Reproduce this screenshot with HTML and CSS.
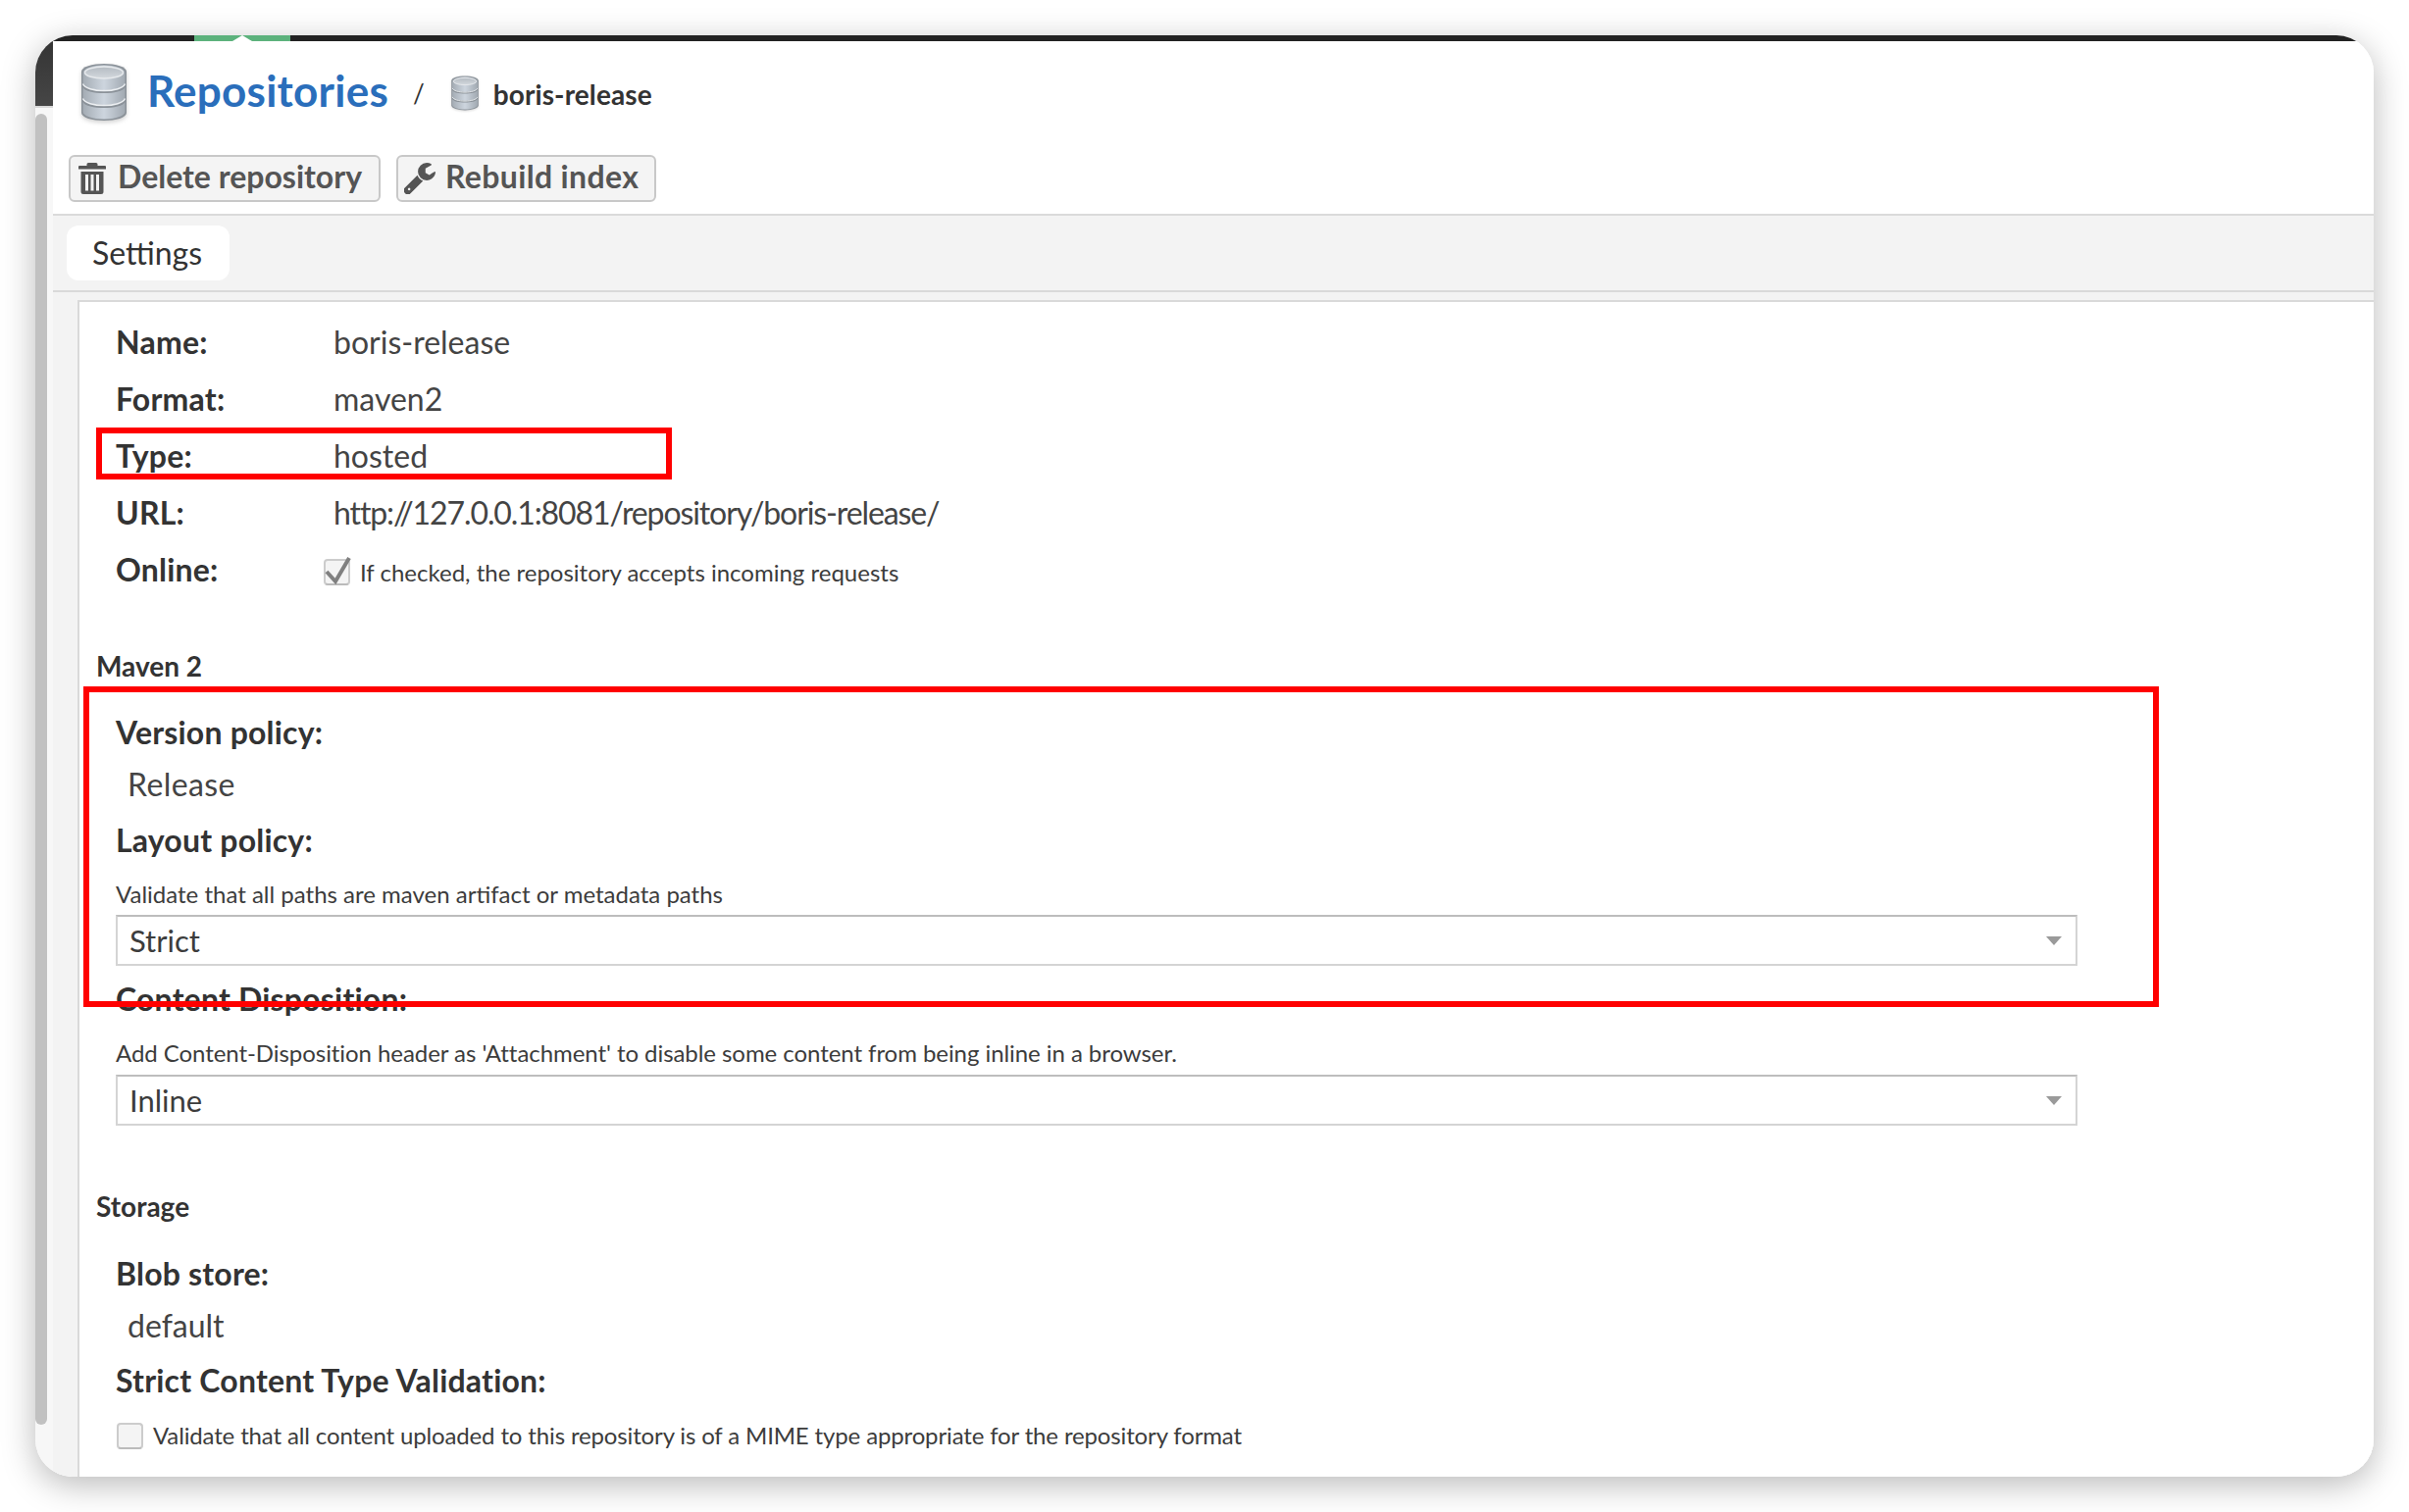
FILE: index.html
```html
<!DOCTYPE html>
<html lang="en">
<head>
<meta charset="utf-8">
<title>Repositories / boris-release</title>
<link rel="stylesheet" href="styles.css">
</head>
<body>
<svg class="defs" width="0" height="0" aria-hidden="true">
  <defs>
    <linearGradient id="dbg" x1="0" y1="0" x2="1" y2="0">
      <stop offset="0" stop-color="#a4acb4"/>
      <stop offset=".5" stop-color="#cdd5de"/>
      <stop offset="1" stop-color="#a2aab2"/>
    </linearGradient>
    <linearGradient id="dbt" x1="0" y1="0" x2="0" y2="1">
      <stop offset="0" stop-color="#b4bbc2"/>
      <stop offset="1" stop-color="#d3d8dd"/>
    </linearGradient>
    <symbol id="db" viewBox="0 0 50 60">
      <path d="M2 9C2 4 13 1 25 1s23 3 23 8v42c0 5-11 8-23 8S2 56 2 51z" fill="#8b9299"/>
      <path d="M3.500 10c0-4 10-7.500 21.500-7.500S46.500 6 46.500 10v11c0 4-10 7-21.500 7S3.500 25 3.500 21z" fill="url(#dbg)"/>
      <path d="M3.500 25c2 4 11 6 21.500 6s19.500-2 21.500-6v11c0 4-10 7-21.500 7S3.500 40 3.500 36z" fill="url(#dbg)"/>
      <path d="M3.500 40c2 4 11 6 21.500 6s19.500-2 21.500-6v10c0 4-10 7.500-21.500 7.500S3.500 54 3.500 50z" fill="url(#dbg)"/>
      <ellipse cx="25" cy="10" rx="19.500" ry="6" fill="url(#dbt)" stroke="#e6e9ec" stroke-width="1.500"/>
      <path d="M3.500 21.500c2 4.500 11 7 21.500 7s19.500-2.500 21.500-7M3.500 36.500c2 4.500 11 7 21.500 7s19.500-2.500 21.500-7" fill="none" stroke="#eceff2" stroke-width="1.500"/>
    </symbol>
  </defs>
</svg>

<div class="window">
  <aside class="rail">
    <div class="rail-dark"></div>
    <div class="rail-track"><div class="scrollbar"></div></div>
  </aside>

  <main class="main">
    <div class="strip"><div class="strip-tab"><span class="strip-notch"></span></div></div>

    <header class="crumbs">
      <svg class="db-large"><use href="#db"/></svg>
      <a class="crumb-title">Repositories</a>
      <span class="crumb-sep">/</span>
      <svg class="db-small"><use href="#db"/></svg>
      <span class="crumb-leaf">boris-release</span>
    </header>

    <div class="toolbar">
      <button class="btn btn-delete" type="button">
        <svg class="btn-icon" viewBox="0 0 28 32"><path fill="#555" d="M10 0h8a1.500 1.500 0 0 1 1.500 1.500V3H27a1 1 0 0 1 1 1v2.500H0V4a1 1 0 0 1 1-1h7.500V1.500A1.500 1.500 0 0 1 10 0zM2.500 9h23v20.500A2.500 2.500 0 0 1 23 32H5a2.500 2.500 0 0 1-2.500-2.500zM7 12v16.500h3V12zm5.500 0v16.500h3V12zM18 12v16.500h3V12z" fill-rule="evenodd"/></svg>
        Delete repository
      </button>
      <button class="btn btn-rebuild" type="button">
        <svg class="btn-icon" viewBox="128 128 1600 1600"><path fill="#555" d="M448 1472q0-26-19-45t-45-19-45 19-19 45 19 45 45 19 45-19 19-45zm644-420l-682 682q-37 37-90 37-52 0-91-37l-106-108q-38-36-38-90 0-53 38-91l681-681q39 98 114.500 173.500t173.500 114.500zm634-435q0 39-23 106-47 134-164.500 217.500t-258.500 83.500q-185 0-316.500-131.500t-131.500-316.500 131.500-316.500 316.500-131.500q58 0 121.500 16.500t107.500 46.500q16 11 16 28t-16 28l-293 169v224l193 107q5-3 79-48.500t135.500-81 70.500-35.500q15 0 23.500 10t8.500 25z"/></svg>
        Rebuild index
      </button>
    </div>

    <nav class="tabbar"><span class="tab">Settings</span></nav>

    <div class="body">
      <section class="form">
        <div class="rows">
          <span class="label">Name:</span><span class="val">boris-release</span>
          <span class="label">Format:</span><span class="val">maven2</span>
          <span class="label">Type:</span><span class="val">hosted</span>
          <span class="label">URL:</span><span class="val val-url">http://127.0.0.1:8081/repository/boris-release/</span>
          <span class="label">Online:</span>
          <span class="check-line check-online">
            <span class="box box-on">
              <svg class="tick" viewBox="0 0 28 28"><path d="M3 13l9 10L26-1" fill="none" stroke="#808080" stroke-width="4"/></svg>
            </span>
            <span class="help">If checked, the repository accepts incoming requests</span>
          </span>
        </div>

        <h2 class="heading heading-maven">Maven 2</h2>
        <div class="label field-maven">Version policy:</div>
        <div class="value value-wide">Release</div>
        <div class="label field-next">Layout policy:</div>
        <div class="help help-block">Validate that all paths are maven artifact or metadata paths</div>
        <div class="select"><span>Strict</span><i class="caret"></i></div>
        <div class="label field-tight">Content Disposition:</div>
        <div class="help help-block help-tight">Add Content-Disposition header as 'Attachment' to disable some content from being inline in a browser.</div>
        <div class="select select-low"><span>Inline</span><i class="caret"></i></div>

        <h2 class="heading heading-storage">Storage</h2>
        <div class="label field-first">Blob store:</div>
        <div class="value">default</div>
        <div class="label field-next-b">Strict Content Type Validation:</div>
        <div class="check-line check-bottom">
          <span class="box"></span>
          <span class="help help-tighter">Validate that all content uploaded to this repository is of a MIME type appropriate for the repository format</span>
        </div>
      </section>
    </div>
  </main>

  <div class="mark mark-type"></div>
  <div class="mark mark-maven"></div>
</div>
</body>
</html>
```

FILE: styles.css
```css
* { box-sizing: border-box; }
html, body { margin: 0; padding: 0; background: #fff; }
body {
  width: 2456px;
  height: 1542px;
  padding: 36px;
  overflow: hidden;
  font-family: "Lato", "Liberation Sans", sans-serif;
  color: #333;
}
.defs { position: absolute; }

.window {
  position: relative;
  display: flex;
  width: 2384px;
  height: 1470px;
  border-radius: 38px;
  overflow: hidden;
  background: #fff;
  box-shadow: 0 8px 34px rgba(0, 0, 0, .28);
}

.rail { width: 18px; flex: none; display: flex; flex-direction: column; }
.rail-dark { height: 74px; background: linear-gradient(#333, #464646); border-bottom: 2px solid #d8d8d8; }
.rail-track { flex: 1; background: #f7f7f7; padding-top: 6px; }
.scrollbar { width: 12px; height: 1337px; background: #c1c1c1; border-radius: 6px; }

.main { flex: 1; min-width: 0; display: flex; flex-direction: column; background: #fff; }

.strip { height: 6px; background: #222; flex: none; padding-left: 144px; }
.strip-tab { position: relative; width: 98px; height: 6px; background: #5cb27c; }
.strip-notch {
  position: absolute;
  left: 39px;
  top: 0;
  width: 20px;
  height: 6px;
  background: #fff;
  clip-path: polygon(50% 0, 100% 100%, 0 100%);
}

.crumbs { height: 116px; flex: none; display: flex; align-items: center; padding: 0 0 11px 27px; }
.db-large { width: 50px; height: 60px; filter: drop-shadow(0 2px 2px rgba(0,0,0,.18)); margin-top: -2px; }
.crumb-title { margin: -5px 0 0 19px; font-size: 44px; font-weight: 700; color: #2a6ebb; line-height: 1; letter-spacing: .25px; }
.crumb-sep { margin-left: 25px; font-size: 26px; color: #333; }
.db-small { width: 30px; height: 36px; margin: 1px 0 0 26px; filter: drop-shadow(0 1px 1px rgba(0,0,0,.15)); }
.crumb-leaf { margin: 3px 0 0 14px; font-size: 28px; font-weight: 700; color: #333; letter-spacing: .1px; }

.toolbar { flex: none; display: flex; gap: 16px; padding: 0 0 12px 16px; border-bottom: 2px solid #dadada; height: 62px; }
.btn {
  display: flex;
  align-items: center;
  height: 48px;
  margin: 0;
  border: 2px solid #c8c8c8;
  border-radius: 6px;
  background: #f4f4f4;
  color: #555;
  font: 700 32px "Lato", "Liberation Sans", sans-serif;
  padding: 0 0 6px;
}
.btn-delete { width: 318px; padding-left: 8px; gap: 12px; }
.btn-rebuild { width: 265px; padding-left: 6px; gap: 10px; letter-spacing: .35px; }
.btn-icon { width: 28px; height: 32px; flex: none; margin-top: 6px; }
.btn-rebuild .btn-icon { width: 32px; }

.tabbar { flex: none; height: 78px; padding: 10px 14px; background: #f3f3f3; border-bottom: 2px solid #d9d9d9; }
.tab { display: flex; align-items: center; justify-content: center; width: 166px; height: 56px; padding: 0 2px 2px 0; background: #fff; border-radius: 12px; font-size: 32px; color: #333; }

.body { flex: 1; min-height: 0; background: #f3f3f3; padding: 8px 0 0 25px; }
.form { height: 100%; background: #fff; border-top: 2px solid #d9d9d9; border-left: 2px solid #d9d9d9; padding: 12px 0 0 37px; overflow: hidden; }

.rows { display: grid; grid-template-columns: 222px 1fr; grid-auto-rows: 58px; align-items: center; }
.label { font-size: 32px; font-weight: 700; color: #333; line-height: 40px; letter-spacing: .2px; }
.val { font-size: 32px; color: #444; line-height: 40px; }
.val-url { letter-spacing: -1.1px; }
.value { font-size: 32px; color: #444; line-height: 40px; height: 40px; margin: 13px 0 0 12px; }
.value-wide { letter-spacing: .4px; }
.help { font-size: 24px; color: #3c3c3c; line-height: 30px; }
.help-block { margin-top: 20px; height: 30px; }
.help-tight { letter-spacing: -.06px; }
.help-tighter { letter-spacing: -.14px; }

.check-line { display: flex; align-items: center; gap: 10px; margin-left: -10px; }
.check-online { margin-top: 6px; }
.check-bottom { margin: 21px 0 0 1px; }
.box { position: relative; flex: none; width: 27px; height: 27px; background: #f4f4f4; border: 2px solid #ccc; border-bottom-color: #bbb; border-radius: 4px; }
.box-on { margin-top: -2px; }
.tick { position: absolute; left: -2px; top: -2px; width: 28px; height: 28px; overflow: visible; }

.heading { margin: 0; font-size: 28px; font-weight: 700; color: #333; line-height: 40px; margin-left: -20px; }
.heading-maven { margin-top: 49px; }
.heading-storage { margin-top: 62px; }
.field-maven { margin-top: 28px; }
.field-first { margin-top: 29px; }
.field-next { margin-top: 17px; }
.field-next-b { margin-top: 16px; }
.field-tight { margin-top: 14px; }

.select {
  display: flex;
  align-items: center;
  justify-content: space-between;
  width: 2000px;
  height: 52px;
  margin-top: 6px;
  padding: 0 14px 0 12px;
  border: 2px solid #d4d4d4;
  border-top-color: #bdbdbd;
  background: #fff;
  font-size: 31px;
  color: #3c3c3c;
}
.select-low { margin-top: 7px; }
.caret { width: 0; height: 0; border-left: 8px solid transparent; border-right: 8px solid transparent; border-top: 9px solid #9a9a9a; }

.mark { position: absolute; border: 6px solid #f00; pointer-events: none; }
.mark-type { left: 62px; top: 400px; width: 587px; height: 53px; }
.mark-maven { left: 49px; top: 664px; width: 2116px; height: 327px; }
```
